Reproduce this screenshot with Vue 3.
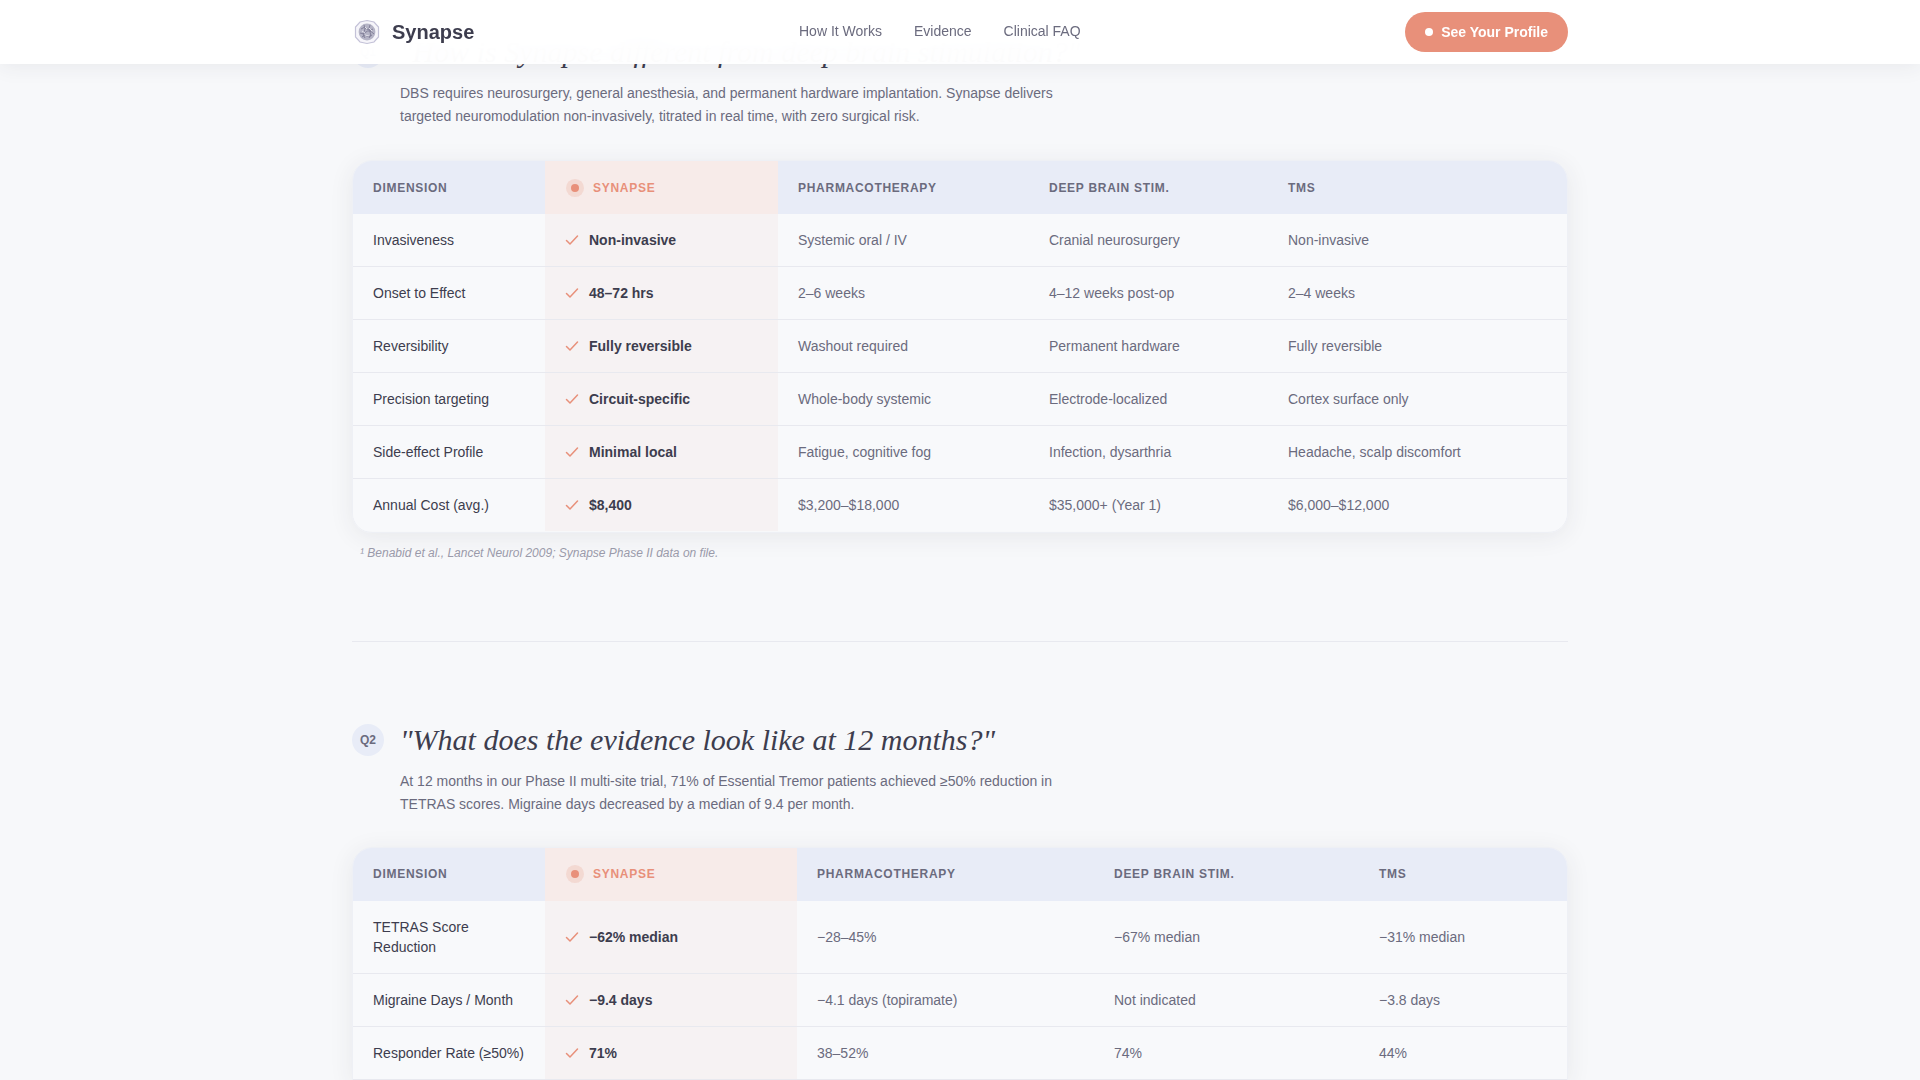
<script setup>
const links = ["How It Works", "Evidence", "Clinical FAQ"];

const sections = [
  {
    id: "q1",
    badge: "Q1",
    question: '"How is Synapse different from deep brain stimulation?"',
    body: "DBS requires neurosurgery, general anesthesia, and permanent hardware implantation. Synapse delivers targeted neuromodulation non-invasively, titrated in real time, with zero surgical risk.",
    note: "¹ Benabid et al., Lancet Neurol 2009; Synapse Phase II data on file.",
    rows: [
      ["Invasiveness", "Non-invasive", "Systemic oral / IV", "Cranial neurosurgery", "Non-invasive"],
      ["Onset to Effect", "48–72 hrs", "2–6 weeks", "4–12 weeks post-op", "2–4 weeks"],
      ["Reversibility", "Fully reversible", "Washout required", "Permanent hardware", "Fully reversible"],
      ["Precision targeting", "Circuit-specific", "Whole-body systemic", "Electrode-localized", "Cortex surface only"],
      ["Side-effect Profile", "Minimal local", "Fatigue, cognitive fog", "Infection, dysarthria", "Headache, scalp discomfort"],
      ["Annual Cost (avg.)", "$8,400", "$3,200–$18,000", "$35,000+ (Year 1)", "$6,000–$12,000"],
    ],
  },
  {
    id: "q2",
    badge: "Q2",
    question: '"What does the evidence look like at 12 months?"',
    body: "At 12 months in our Phase II multi-site trial, 71% of Essential Tremor patients achieved ≥50% reduction in TETRAS scores. Migraine days decreased by a median of 9.4 per month.",
    rows: [
      ["TETRAS Score Reduction", "−62% median", "−28–45%", "−67% median", "−31% median"],
      ["Migraine Days / Month", "−9.4 days", "−4.1 days (topiramate)", "Not indicated", "−3.8 days"],
      ["Responder Rate (≥50%)", "71%", "38–52%", "74%", "44%"],
    ],
  },
];
</script>

<template>
  <div class="page">
    <header class="nav">
      <div class="nav-inner">
        <a class="brand">
          <svg class="logo" viewBox="0 0 28 28" aria-hidden="true">
            <path d="M14 2.5 21 4 25.5 9V19L21 24 14 25.5 7 24 2.5 19V9L7 4Z" fill="#f6f5fa" stroke="#c4c2d8" stroke-width="1.2" />
            <circle cx="14" cy="14" r="8.4" fill="#b5b4c6" />
            <path d="M8 11q3-3 6 0t6 0M7 15q3 2 6-1t8 2M9 19q3-3 5-1t5-1M11 7q2 4 0 7t1 6M17 7q-2 4 0 7t-1 6" fill="none" stroke="#83819a" stroke-width="1" />
            <path d="M9 13l3 2M16 10l3 3M12 17l4 1M12 9l2 2" stroke="#e4e3ec" stroke-width="1" />
          </svg>
          <span>Synapse</span>
        </a>
        <nav class="links">
          <a v-for="link in links" :key="link">{{ link }}</a>
        </nav>
        <button class="cta" type="button"><i></i>See Your Profile</button>
      </div>
    </header>

    <main class="main">
      <template v-for="(section, index) in sections" :key="section.id">
        <hr v-if="index" class="rule" />
        <section class="faq" :class="section.id">
          <div class="question">
            <span class="badge">{{ section.badge }}</span>
            <h2>{{ section.question }}</h2>
          </div>
          <p class="answer">{{ section.body }}</p>
          <div class="card">
            <table>
              <colgroup>
                <col class="c1" /><col class="c2" /><col class="c3" /><col class="c4" /><col class="c5" />
              </colgroup>
              <thead>
                <tr>
                  <th>Dimension</th>
                  <th class="syn"><span class="syn-head"><i class="dot"></i>Synapse</span></th>
                  <th>Pharmacotherapy</th>
                  <th>Deep Brain Stim.</th>
                  <th>TMS</th>
                </tr>
              </thead>
              <tbody>
                <tr v-for="row in section.rows" :key="row[0]">
                  <td class="dim">{{ row[0] }}</td>
                  <td class="syn">
                    <span class="win">
                      <svg viewBox="0 0 14 14" aria-hidden="true"><path d="M1.5 7.5 5 11 12.5 3" /></svg>
                      {{ row[1] }}
                    </span>
                  </td>
                  <td>{{ row[2] }}</td>
                  <td>{{ row[3] }}</td>
                  <td>{{ row[4] }}</td>
                </tr>
              </tbody>
            </table>
          </div>
          <p v-if="section.note" class="note">{{ section.note }}</p>
        </section>
      </template>
    </main>
  </div>
</template>

<style scoped>
.page {
  height: 1080px;
  overflow: hidden;
  background: #f7f8fa;
  color: #3d3d4e;
  font-family: "Liberation Sans", Arial, sans-serif;
}

.nav {
  position: fixed;
  inset: 0 0 auto 0;
  z-index: 10;
  height: 64px;
  background: rgba(255, 255, 255, 0.97);
  backdrop-filter: blur(16px);
  box-shadow: 0 2px 20px rgba(45, 45, 58, 0.08);
}

.nav-inner {
  width: 1216px;
  height: 100%;
  margin: 0 auto;
  display: flex;
  align-items: center;
}

.brand {
  width: 447px;
  display: flex;
  align-items: center;
  gap: 10px;
  font-size: 20px;
  font-weight: 700;
  color: #3d3d4e;
}

.brand span {
  margin-left: 1px;
}

.logo {
  width: 28px;
  height: 28px;
  margin-left: 1px;
}

.links {
  display: flex;
  gap: 32px;
  padding-bottom: 2px;
  font-size: 14px;
  color: #6b6b7e;
}

.cta {
  margin-left: auto;
  height: 40px;
  padding: 0 20px;
  display: flex;
  align-items: center;
  gap: 8px;
  border: 0;
  border-radius: 999px;
  background: #e8907a;
  color: #fff;
  font: 700 14px "Liberation Sans", Arial, sans-serif;
}

.cta i {
  width: 8px;
  height: 8px;
  border-radius: 50%;
  background: #fff;
}

.main {
  width: 1216px;
  margin: 0 auto;
  padding-top: 32px;
}

.question {
  display: flex;
  align-items: center;
  gap: 16px;
}

.badge {
  flex: none;
  width: 32px;
  height: 32px;
  border-radius: 50%;
  display: flex;
  align-items: center;
  justify-content: center;
  background: #e8ecf7;
  color: #6b6b7e;
  font-size: 12px;
  font-weight: 700;
}

h2 {
  margin: 0;
  font: italic 400 30px/40px "Liberation Serif", "Times New Roman", serif;
  color: #3d3d4e;
}

.answer {
  width: 660px;
  margin: 10px 0 32px 48px;
  font-size: 14px;
  line-height: 1.65;
  color: #6b6b7e;
}

.q2 .answer {
  margin-bottom: 31px;
}

.card {
  border: 1px solid #eef0f5;
  border-radius: 20px 20px 0 0;
  box-shadow: 0 4px 24px rgba(45, 45, 58, 0.08);
  overflow: hidden;
}

.q1 .card {
  border-radius: 20px;
}

table {
  width: 100%;
  table-layout: fixed;
  border-collapse: collapse;
  font-size: 14px;
}

.c1 {
  width: 192px;
}

.q1 .c2 {
  width: 233px;
}

.q1 .c3 {
  width: 251px;
}

.q1 .c4 {
  width: 239px;
}

.q2 .c2 {
  width: 252px;
}

.q2 .c3 {
  width: 297px;
}

.q2 .c4 {
  width: 265px;
}

th {
  height: 53px;
  padding: 0 20px;
  background: #e8ecf7;
  color: #6b6b7e;
  font-size: 12px;
  font-weight: 700;
  letter-spacing: 0.72px;
  text-align: left;
  text-transform: uppercase;
}

th.syn {
  background: #f7ebe9;
  color: #e8907a;
}

.syn-head {
  display: flex;
  align-items: center;
  gap: 8px;
}

.dot {
  width: 8px;
  height: 8px;
  margin: 0 6px 0 6px;
  border-radius: 50%;
  background: #e8907a;
  box-shadow: 0 0 0 5px rgba(232, 144, 122, 0.2);
}

td {
  height: 53px;
  padding: 10px 20px;
  background: #f8f9fb;
  border-bottom: 1px solid #e8e9ef;
  color: #6b6b7e;
  line-height: 20px;
  box-sizing: border-box;
}

tbody tr:last-child td {
  border-bottom-color: transparent;
}

.q2 tbody tr:last-child td {
  border-bottom-color: #e8e9ef;
}

.q1 tbody tr:first-child td {
  height: 52px;
}

.q2 tbody tr:first-child td {
  height: 73px;
}

td.dim {
  color: #3d3d4e;
}

td.syn {
  background: #f6f2f3;
  color: #3d3d4e;
  font-weight: 700;
}

.win {
  display: flex;
  align-items: center;
  gap: 10px;
}

.win svg {
  width: 14px;
  height: 14px;
  fill: none;
  stroke: #e8907a;
  stroke-width: 1.5;
  stroke-linecap: round;
  stroke-linejoin: round;
}

.note {
  margin: 13px 0 0 8px;
  font-size: 12px;
  font-style: italic;
  color: #9a9aaa;
}

.rule {
  margin: 81px 0 78px;
  border: 0;
  border-top: 1px solid #e8e9ef;
}
</style>

<style>
html,
body {
  margin: 0;
  overflow: hidden;
}
</style>
